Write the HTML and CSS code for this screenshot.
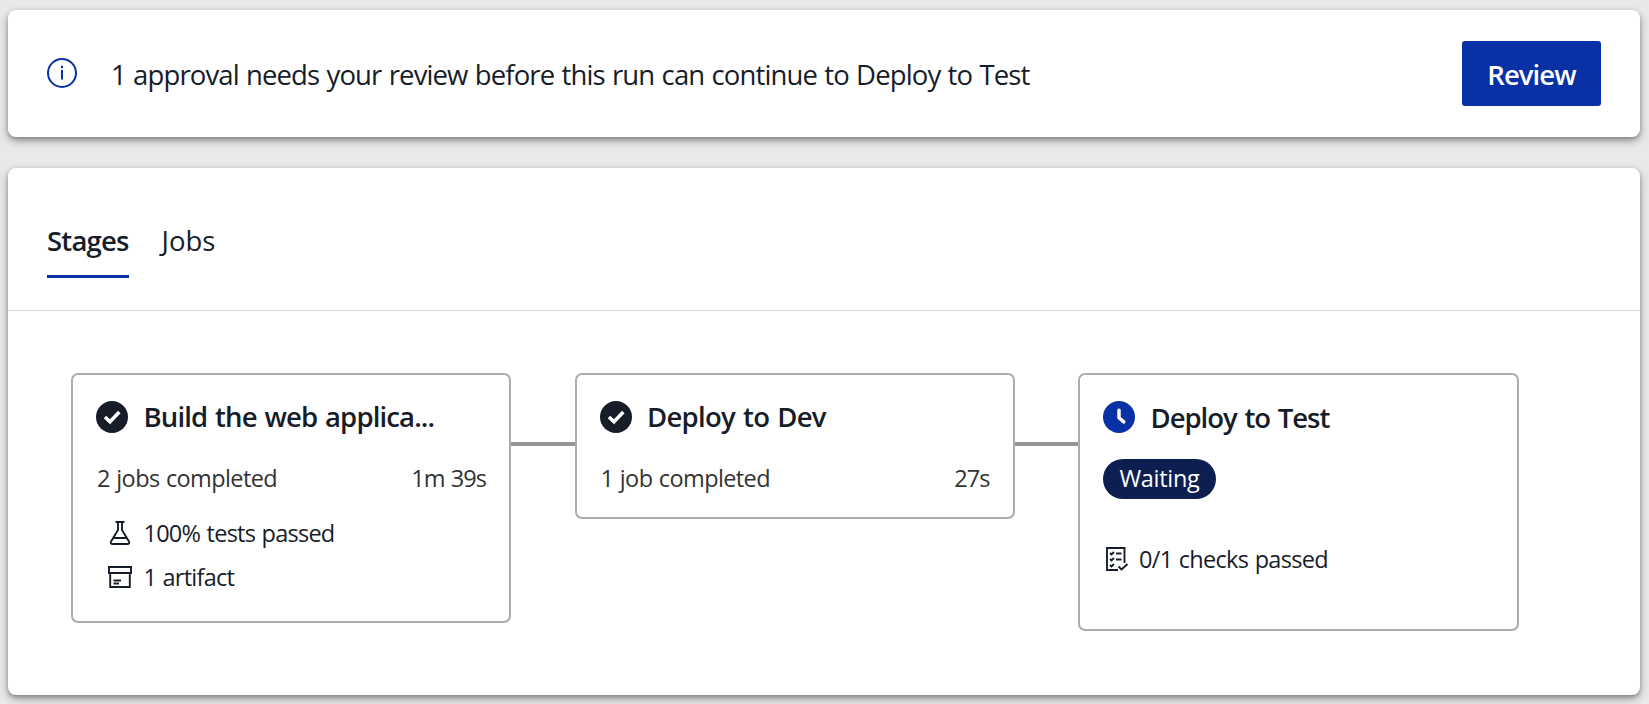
FILE: index.html
```html
<!DOCTYPE html>
<html lang="en">
<head>
<meta charset="utf-8">
<title>Pipeline run</title>
<link rel="stylesheet" href="styles.css">
</head>
<body>
<main class="page">
  <section class="panel banner">
    <svg class="info-icon" viewBox="0 0 30 30"><circle cx="15" cy="15" r="14"/><path d="M15 12v9.500M15 7.800v2.400"/></svg>
    <p class="banner-text">1 approval needs your review before this run can continue to Deploy to Test</p>
    <button class="review">Review</button>
  </section>
  <section class="panel run">
    <nav class="tabs">
      <a class="tab active">Stages</a>
      <a class="tab">Jobs</a>
    </nav>
    <div class="stages">
      <article class="stage build">
        <header class="stage-head">
          <svg class="status" viewBox="0 0 32 32"><circle class="dark" cx="16" cy="16" r="16"/><path class="mark" d="M9 16l5 4.800 9.300-9.800"/></svg>
          <h2 class="title">Build the web applica...</h2>
        </header>
        <div class="summary"><span>2 jobs completed</span><span class="time">1m 39s</span></div>
        <ul class="facts">
          <li class="fact"><svg class="fact-icon" viewBox="0 0 24 24"><path d="M7.500 1h9M10 1v8L3.200 20.200Q1.800 23 4.800 23h14.400q3 0 1.600-2.800L14 9V1M5.500 17h13"/></svg><span>100% tests passed</span></li>
          <li class="fact"><svg class="fact-icon" viewBox="0 0 24 24"><path d="M1 2h22v6H1zM2.200 8v14h19.600V8M5.500 15.500h7.500M5.500 18.500h5.500"/></svg><span>1 artifact</span></li>
        </ul>
      </article>
      <div class="link"></div>
      <article class="stage dev">
        <header class="stage-head">
          <svg class="status" viewBox="0 0 32 32"><circle class="dark" cx="16" cy="16" r="16"/><path class="mark" d="M9 16l5 4.800 9.300-9.800"/></svg>
          <h2 class="title title-dev">Deploy to Dev</h2>
        </header>
        <div class="summary"><span>1 job completed</span><span class="time">27s</span></div>
      </article>
      <div class="link"></div>
      <article class="stage test">
        <header class="stage-head">
          <svg class="status" viewBox="0 0 32 32"><circle class="blue" cx="16" cy="16" r="16"/><path class="hand" d="M16 9.200v7.600l4.800 4"/></svg>
          <h2 class="title title-test">Deploy to Test</h2>
        </header>
        <div class="pill">Waiting</div>
        <div class="checks"><svg class="check-icon" viewBox="0 0 22 24"><path d="M18.500 16V1H1v22h11M4 6l1.500 1.500L8 5M4 12l1.500 1.500L8 11M4 18l1.500 1.500L8 17M10 6.500h5.500M10 12.500h5.500M12.500 19.500l3 3 6-5.500"/></svg><span>0/1 checks passed</span></div>
      </article>
    </div>
  </section>
</main>
</body>
</html>
```
FILE: styles.css
```css
* { box-sizing: border-box; margin: 0; padding: 0; }
body { background: #e9e9e9; font-family: "Open Sans", "Noto Sans", sans-serif; color: #161d29; height: 704px; overflow: hidden; }
.page { padding: 10px 9px 0 8px; display: flex; flex-direction: column; gap: 31px; }
.panel { background: #fff; border-radius: 8px; box-shadow: 0 4px 10px rgba(0,0,0,.3), 0 2px 4px rgba(0,0,0,.25); }
.banner { height: 127px; display: flex; align-items: center; padding: 0 39px; }
.info-icon { width: 30px; height: 30px; margin-bottom: 2px; fill: none; stroke: #0831a5; stroke-width: 2; }
.banner-text { font-size: 27.5px; line-height: 38px; letter-spacing: -.88px; word-spacing: 1px; margin-left: 34px; padding-top: 3px; flex: 1; white-space: nowrap; }
.review { width: 139px; height: 65px; border: 0; border-radius: 3px; background: #0831a5; color: #fff; font: 600 27.5px/38px "Open Sans", "Noto Sans", sans-serif; letter-spacing: -.95px; padding-top: 3px; }
.run { height: 527px; }
.tabs { height: 143px; border-bottom: 1px solid #d6d6d6; padding: 54px 39px 0; display: flex; gap: 33px; }
.tab { height: 56px; font-size: 27.5px; line-height: 38px; }
.active { width: 81.5px; font-weight: 600; letter-spacing: -.8px; border-bottom: 3px solid #0831a5; }
.stages { display: flex; align-items: flex-start; padding: 62px 63px 0; }
.stage { width: 440px; flex: none; border: 2px solid #acacac; border-radius: 7px; padding: 22px 23px 0; }
.build { height: 250px; }
.dev { height: 146px; }
.test { width: 441px; height: 258px; }
.link { width: 63.5px; height: 4px; background: #969696; margin-top: 69px; }
.stage-head { display: flex; align-items: center; gap: 15.5px; height: 40px; }
.status { width: 32px; height: 32px; flex: none; }
.dark { fill: #161d29; }
.blue { fill: #0831a5; }
.mark, .hand { fill: none; stroke: #fff; stroke-width: 3.5; }
.hand { stroke-linecap: round; }
.title { font-size: 27.5px; line-height: 38px; font-weight: 600; letter-spacing: -.86px; word-spacing: 1.5px; white-space: nowrap; }
.title-dev { letter-spacing: -.7px; }
.title-test { letter-spacing: -1px; padding-top: 1px; }
.summary { display: flex; justify-content: space-between; font-size: 23.5px; line-height: 32px; letter-spacing: -.62px; word-spacing: 1px; margin-top: 25px; padding: 0 1px; color: #333; }
.time { letter-spacing: -.95px; margin-right: -1px; }
.facts { list-style: none; padding-left: 12px; margin-top: 17px; }
.fact { display: flex; align-items: center; gap: 11.5px; font-size: 23.5px; line-height: 44px; letter-spacing: -.75px; word-spacing: 1px; }
.fact-icon, .check-icon { width: 24px; height: 24px; fill: none; stroke: #161d29; stroke-width: 1.9; }
.pill { margin-top: 22px; width: 113px; height: 40px; border-radius: 20px; background: #0d1f50; color: #fff; font-size: 23.5px; line-height: 39px; letter-spacing: -.3px; text-align: center; }
.checks { margin-top: 43px; padding-left: 1.5px; display: flex; align-items: center; font-size: 23.5px; line-height: 34px; letter-spacing: -.7px; word-spacing: 1px; gap: 10.5px; }
```
